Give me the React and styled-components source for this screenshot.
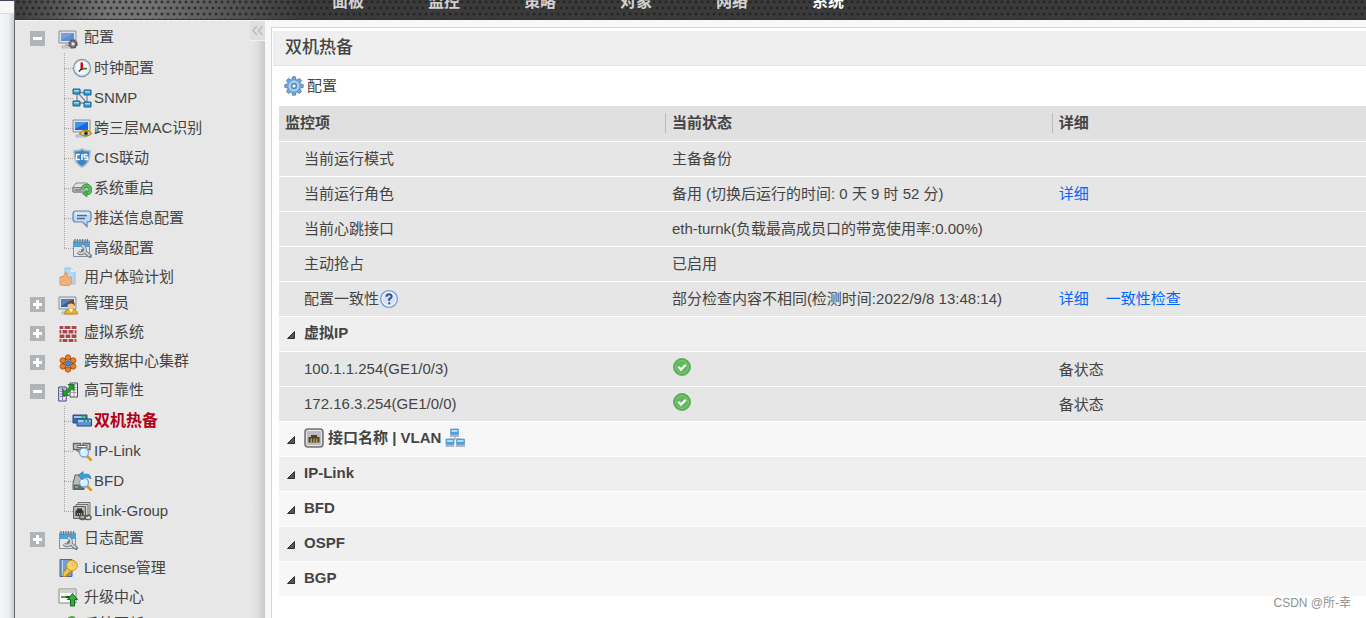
import React from "react";
import styled, { createGlobalStyle, css } from "styled-components";

const GlobalStyle = createGlobalStyle`
  *, *::before, *::after { box-sizing: border-box; }
  body {
    margin: 0;
    background: #fff;
    color: #444;
    font-family: "Liberation Sans", "Noto Sans CJK SC", sans-serif;
    font-size: 15px;
  }
  a { text-decoration: none; color: inherit; }
  button { font: inherit; color: inherit; background: none; border: 0; padding: 0; cursor: pointer; }
  ul { list-style: none; margin: 0; padding: 0; }
  svg { display: block; flex: none; }
`;

const Page = styled.div`
  display: flex;
  height: 100vh;
  overflow: hidden;
`;

const Edge = styled.div`
  flex: none;
  width: 15px;
  border-right: 1px solid #666;
  background: linear-gradient(to right, #f4f5f8, #eceef1 60%, #cdced1);
  &::before {
    content: "";
    display: block;
    height: 14px;
    background: #f6f5f7;
    border-top: 1px solid #45455c;
    border-bottom: 1px solid #dcdcde;
  }
`;

const Console = styled.div`
  flex: 1;
  min-width: 0;
  display: flex;
  flex-direction: column;
`;

const Header = styled.header`
  flex: none;
  height: 20px;
  overflow: hidden;
  border-bottom: 1px solid #4b2a30;
  background-color: #3a3a3b;
  background-image:
    radial-gradient(circle, rgba(30, 30, 31, 0.7) 1px, rgba(30, 30, 31, 0) 2px),
    radial-gradient(circle, rgba(30, 30, 31, 0.7) 1px, rgba(30, 30, 31, 0) 2px),
    linear-gradient(to right, #3e3e3f, #757576 90px, #757576 130px, #3b3b3c 290px);
  background-size: 6px 12px, 6px 12px, 100% 100%;
  background-position: 0 -4px, 3px 2px, 0 0;
`;

const Nav = styled.nav`
  display: flex;
  align-items: flex-end;
  height: 14px;
  padding-left: 302px;
`;

const NavLink = styled.a`
  flex: none;
  width: 96px;
  padding-left: 15px;
  font-size: 16px;
  line-height: 24px;
  font-weight: bold;
  color: ${(p) => (p.$active ? "#fff" : "#d2d2d2")};
`;

const Body = styled.div`
  flex: 1;
  min-height: 0;
  display: flex;
  border-top: 1px solid #f6f6f6;
`;

const Sidebar = styled.aside`
  flex: none;
  width: 250px;
  display: flex;
  background: linear-gradient(to right, #e7e7e7 236px, #e0e0e0 242px, #c9c9c9);
`;

const Tree = styled.ul`
  flex: 1;
  padding: 3px 0 0 15px;
`;

const CollapseButton = styled.button`
  flex: none;
  width: 15px;
  height: 20px;
  display: flex;
  align-items: center;
  justify-content: center;
  background: #dedede;
  border-bottom: 1px solid #f2f2f2;
`;

const TreeRow = styled.div`
  display: flex;
  align-items: center;
  height: ${(p) => (p.$compact ? "27px" : "29px")};
`;

const ToggleSlot = styled.div`
  width: 28px;
`;

const Toggle = styled.button`
  display: block;
`;

const TreeLink = styled.a`
  display: flex;
  align-items: center;
  gap: 6px;
  line-height: 20px;
  white-space: nowrap;
`;

const GroupText = styled.span`
  padding-bottom: ${(p) => (p.$raised ? "4px" : "0")};
`;

const Branch = styled.ul`
  margin-left: 34px;
`;

const Leaf = styled.li`
  display: flex;
  align-items: center;
  height: 30px;
  background-image:
    repeating-linear-gradient(to bottom, #a9a9a9 0 1px, transparent 1px 2px),
    repeating-linear-gradient(to right, #a9a9a9 0 1px, transparent 1px 2px);
  background-repeat: no-repeat;
  background-size: 1px 100%, 9px 1px;
  background-position: 0 0, 0 15px;
  padding-left: 8px;
  &:last-child { background-size: 1px 15px, 9px 1px; }
`;

const LeafLink = styled(TreeLink)`
  gap: 2px;
  ${(p) => p.$active && css`
    color: #b00018;
    font-size: 16px;
    font-weight: bold;
  `}
`;

const Main = styled.main`
  flex: 1;
  min-width: 0;
  display: flex;
  padding: 6px 0 0 6px;
  background: #f8f8f8;
`;

const Panel = styled.section`
  flex: 1;
  min-width: 0;
  padding: 3px 0 0 1px;
  background: #fff;
  border-top: 1px solid #d6d6d6;
  border-left: 1px solid #d6d6d6;
`;

const PanelTitle = styled.h1`
  margin: 0;
  height: 35px;
  padding-left: 12px;
  font-size: 17px;
  line-height: 34px;
  font-weight: 500;
  background: #efefef;
  border-bottom: 1px solid #e2e2e2;
`;

const Toolbar = styled.div`
  display: flex;
  align-items: center;
  height: 40px;
  padding-left: 11px;
`;

const ToolButton = styled.button`
  display: flex;
  align-items: center;
  gap: 3px;
  line-height: 20px;
`;

const StatusTable = styled.table`
  width: calc(100% - 6px);
  margin-left: 6px;
  table-layout: fixed;
  border-collapse: collapse;
`;

const HeadCell = styled.th`
  width: ${(p) => p.$width || "auto"};
  height: 35px;
  padding: 0;
  text-align: left;
  background: #e0e0e0;
`;

const HeadText = styled.div`
  padding-left: 6px;
  line-height: 20px;
  border-left: ${(p) => (p.$divided ? "1px solid #bbb" : "0")};
`;

const Row = styled.tr`
  height: 35px;
  background: ${(p) => p.$tone};
  border-top: 1px solid #fff;
`;

const Cell = styled.td`
  padding: 0 0 0 ${(p) => (p.$first ? "25px" : "7px")};
  white-space: nowrap;
`;

const CellLine = styled.div`
  display: flex;
  align-items: center;
  line-height: 20px;
`;

const StatusMark = styled.span`
  padding-bottom: 4px;
`;

const DetailLinks = styled(CellLine)`
  gap: 17px;
  color: #06f;
`;

const SectionCell = styled.th`
  padding: 0 0 2px 8px;
  text-align: left;
`;

const SectionButton = styled.button`
  display: flex;
  align-items: center;
  gap: 9px;
  font-weight: bold;
  line-height: 20px;
`;

const SectionLabel = styled.span`
  display: flex;
  align-items: center;
  gap: 4px;
`;

const Watermark = styled.div`
  position: absolute;
  right: 15px;
  bottom: 6px;
  font-size: 12px;
  line-height: 18px;
  color: #909090;
`;

const Svg = ({ size = 20, children }) => (
  <svg width={size} height={size} viewBox="0 0 20 20" aria-hidden="true">{children}</svg>
);

const Monitor = ({ screen = "#5f8fd2", light = "#86aee2" }) => (
  <>
    <path d="M1 2h17v12H1z" fill="#dfe2e5" stroke="#8b9096" />
    <path d="M3 4h13v8H3z" fill={screen} />
    <path d="M3 4h13L3 11z" fill={light} opacity=".6" />
    <path d="M7 14h5v3H7z" fill="#b4b8bc" />
    <path d="M4 17h11v2H4z" fill="#d3d6d9" stroke="#9a9ea3" strokeWidth=".6" />
  </>
);

const Magnifier = () => (
  <>
    <path d="M15 15l4 4" stroke="#e39b12" strokeWidth="3" strokeLinecap="round" />
    <circle cx="12" cy="11.500" r="4.500" fill="#d7efff" stroke="#7fa6c6" strokeWidth="1.300" />
    <path d="M9.500 11a3 3 0 0 1 2.500-2.500" fill="none" stroke="#fff" strokeWidth="1.500" />
  </>
);

const MonitorGear = () => (
  <Svg>
    <Monitor />
    <circle cx="15" cy="15" r="3.700" fill="#9a9a9a" stroke="#555" strokeWidth="2" strokeDasharray="2 .9" />
    <circle cx="15" cy="15" r="3.200" fill="#8b8b8b" stroke="#4d4d4d" strokeWidth=".8" />
    <circle cx="15" cy="15" r="1.400" fill="#eee" />
  </Svg>
);

const ClockIcon = () => (
  <Svg>
    <circle cx="10" cy="10" r="8.500" fill="#f4f8fc" stroke="#8295ab" strokeWidth="1.300" />
    <circle cx="10" cy="10" r="7" fill="none" stroke="#d3deeb" />
    <path d="M8.500 4.500h2.500V12H8.500z" fill="#c41212" />
    <path d="M11 9.800h4v1.700h-4z" fill="#1c8b1c" />
    <path d="M9.500 11l-2.700 2.500" stroke="#222" strokeWidth="1.200" />
  </Svg>
);

const SnmpIcon = () => (
  <Svg>
    <path d="M5 4v11M15 5v10M8 4l4 1M8 15l4 0M7 6l7 8" fill="none" stroke="#7d8a94" strokeWidth="1.300" />
    {[[1, 1], [12, 2], [1, 13], [12, 14]].map(([x, y]) => (
      <g key={`${x}-${y}`}>
        <path d={`M${x} ${y}h7v5h-7z`} fill="#2f9fd6" stroke="#1b6590" />
        <path d={`M${x + 1} ${y + 1}h5v1.500h-5z`} fill="#9adcf6" />
      </g>
    ))}
  </Svg>
);

const MonitorEye = () => (
  <Svg>
    <Monitor screen="#1767dc" light="#55b2ff" />
    <path d="M8 15.500q6-6.500 11.500 0-5.500 5-11.500 0z" fill="#fff1c9" stroke="#c88516" strokeWidth="1.500" />
    <circle cx="14" cy="15.300" r="2.400" fill="#417a76" />
    <circle cx="14" cy="15.300" r="1.100" fill="#111" />
  </Svg>
);

const ShieldIcon = () => (
  <Svg>
    <path d="M10 1c2 1.500 5 2 8 1.700 0 8-1.500 13-8 16.300C3.500 15.700 2 10.700 2 2.700 5 3 8 2.500 10 1z" fill="#3a85c7" stroke="#a9bac8" strokeWidth="1.600" />
    <path d="M7.800 6.500H4.500v5h3.300M10 6v6M15.500 6.500h-3.300V9h3.300v2.500h-3.300" fill="none" stroke="#fff" strokeWidth="1.500" />
  </Svg>
);

const RestartIcon = () => (
  <Svg>
    <path d="M4 5h11l4 4v5H1V9z" fill="#e0e3e1" stroke="#858b87" />
    <path d="M1 9.500h18V14H1z" fill="#b3b9b5" stroke="#7d837f" />
    <path d="M3 12h6" stroke="#6b716d" />
    <path d="M10.500 11.500a4 4 0 1 1 4.500 4" fill="none" stroke="#2f9134" strokeWidth="3.600" />
    <path d="M10.500 11.500a4 4 0 1 1 4.500 4" fill="none" stroke="#63c561" strokeWidth="2" />
    <path d="M15 12.500V19l-4.500-3.300z" fill="#4ab34a" stroke="#2f9134" strokeWidth=".7" />
  </Svg>
);

const MessageIcon = () => (
  <Svg>
    <path d="M4 3h12q3 0 3 3v5q0 3-3 3l-1 0v4.500L10.500 14H4q-3 0-3-3V6q0-3 3-3z" fill="#b9d9f7" stroke="#6486aa" strokeWidth="1.200" />
    <path d="M3 4.500h14v3H3z" fill="#e2f1ff" opacity=".8" />
    <path d="M5 7.500h10M5 10.500h8" stroke="#5a6b84" strokeWidth="1.400" />
  </Svg>
);

const WrenchCalendar = () => (
  <Svg>
    <path d="M1.500 3h16v15.500h-16z" fill="#e3e7ea" stroke="#81909c" />
    <path d="M2 4h15v5H2z" fill="#4aa3d9" />
    <path d="M3 1v4M5.500 1v4M8 1v4M10.500 1v4M13 1v4M15.500 1v4" stroke="#667786" strokeWidth="1.200" />
    <path d="M11 12.500l7 5.500" stroke="#757a7f" strokeWidth="4" strokeLinecap="round" />
    <path d="M10 7.500a4 4 0 1 1-4 6.500" fill="none" stroke="#757a7f" strokeWidth="3.600" />
    <path d="M10 7.500a4 4 0 1 1-4 6.500M12 13l6 5" fill="none" stroke="#cfd3d6" strokeWidth="1.900" />
  </Svg>
);

const ThumbPage = () => (
  <Svg>
    <path d="M7 1h6l4 4v12H7z" fill="#b4daf3" stroke="#8fbddd" />
    <path d="M13 1v4h4z" fill="#e9f6ff" />
    <path d="M2 10l4-1 1-3.500q2.500-.5 2.500 2L9 10h4q1.500 1 .5 2.500 1 1 0 2.200.4 1.200-.6 2-.3 1.600-2 1.800H6l-4-.6z" fill="#efb27c" stroke="#d4925c" strokeWidth=".8" />
  </Svg>
);

const AdminIcon = () => (
  <Svg>
    <Monitor screen="#2e5fa9" light="#6d98d4" />
    <path d="M6.500 19q.5-5 6.500-5.500 6 .5 6.500 5.500z" fill="#e9b526" stroke="#a97a10" strokeWidth=".8" />
    <path d="M11 14l2 3.500 2-3.500z" fill="#fff" />
    <circle cx="13" cy="10.500" r="3.500" fill="#f1c391" />
    <path d="M9.300 10.500Q9 5.500 13 5.700q4.300 0 3.800 5.500Q16 8.500 13 8.600q-3 0-3.700 1.900z" fill="#7d4513" />
  </Svg>
);

const FirewallIcon = () => (
  <Svg>
    <path d="M1 1.500h18v17H1z" fill="#f8f1f1" />
    <path d="M1.500 2h17v16h-17z" fill="#a8474b" />
    <path d="M1 5.500h18M1 10h18M1 14.500h18M6 2v3.500M13 2v3.500M4 5.500V10M10 5.500V10M16 5.500V10M7 10v4.500M13 10v4.500M4 14.500V18M10 14.500V18M16 14.500V18" stroke="#f6eded" strokeWidth="1.200" />
  </Svg>
);

const ClusterIcon = () => (
  <Svg>
    <circle cx="10" cy="10.500" r="5" fill="none" stroke="#7b4518" strokeWidth="3" />
    {[[10, 4.500], [15.300, 7.500], [15.300, 13.500], [10, 16.500], [4.700, 13.500], [4.700, 7.500]].map(([x, y]) => (
      <circle key={`${x}-${y}`} cx={x} cy={y} r="2.700" fill="#e87f24" stroke="#9c4c12" strokeWidth=".8" />
    ))}
    <circle cx="10" cy="10.500" r="2.600" fill="#3f8bdd" stroke="#2a5590" strokeWidth=".8" />
  </Svg>
);

const ReliabilityIcon = () => (
  <Svg>
    <path d="M.700 5h7.500v14H.700z" fill="#e9e8f6" stroke="#46407c" />
    <path d="M2 7h5M2 9.500h5M2 12h5M2 14.500h5M4.500 6v12" stroke="#77719f" strokeWidth=".9" />
    <path d="M12 1h7.500v14H12z" fill="#f4f4f4" stroke="#4b4b4b" />
    <path d="M13 3h5.500M13 5.500h5.500M13 8h5.500M13 10.500h5.500M16 2v12" stroke="#9a9a9a" strokeWidth=".9" />
    <path d="M16 2.500v6l-2-1.800-4.800 5L11 13.500H5v-6l1.900 1.900 5-5L10 2.500z" fill="#20a024" stroke="#0c5c12" strokeWidth=".7" />
  </Svg>
);

const HotStandbyIcon = () => (
  <Svg>
    <path d="M1 4h14v8H1z" fill="#3b6fbd" stroke="#23477f" />
    <path d="M2 5h12v2H2z" fill="#9bc3f0" />
    <path d="M5 8h14.500v7H5z" fill="#5b92da" stroke="#23477f" />
    <path d="M6 9h12.500v2H6z" fill="#a9cff6" />
    <path d="M9.500 5.500h2M12.500 5.500h1.500M11.500 10h2M15 10h2" stroke="#1fa52b" strokeWidth="2" />
  </Svg>
);

const IpLinkIcon = () => (
  <Svg>
    <path d="M1.500 2.500h7v6h-7zM11 2.500h7v6h-7z" fill="#c5c5c5" stroke="#686868" strokeWidth="1.400" />
    <path d="M5 4.500h10v2H5z" fill="#f1f1f1" stroke="#5e5e5e" strokeWidth=".9" />
    <path d="M4 9q3 1 4 3" stroke="#777" strokeWidth="1.500" fill="none" />
    <Magnifier />
  </Svg>
);

const BfdIcon = () => (
  <Svg>
    <path d="M3 4h7l2 10v4.500H1V13z" fill="#b9bcbd" stroke="#5d6162" />
    <path d="M1.500 13.500h11v4.500h-11z" fill="#646869" />
    <path d="M3 16h3" stroke="#56d756" strokeWidth="1.600" />
    <Magnifier />
    <path d="M6 4.500L11 .5v2.700h5q2.500.5 3 4.500-2-1.900-8-1.700v3z" fill="#3d9edc" stroke="#1b6ca8" strokeWidth=".6" />
  </Svg>
);

const LinkGroupIcon = () => (
  <Svg>
    <path d="M6 1.500h12v12H6z" fill="#d6d6d6" stroke="#707070" />
    <path d="M4 3.500h12v12H4z" fill="#d6d6d6" stroke="#707070" />
    <path d="M1.500 5.500h12v12h-12z" fill="#b7b7b7" stroke="#626262" />
    <path d="M3.500 15V9.500H5v-2h5v2h1.500V15z" fill="#3b3527" />
    <path d="M5 12h1v2H5zM7 12h1v2H7zM9 12h1v2H9z" fill="#d0a52d" />
    <rect x="7.500" y="14.500" width="6" height="4" rx="2" fill="none" stroke="#606060" strokeWidth="1.500" />
    <rect x="13" y="14.500" width="6" height="4" rx="2" fill="none" stroke="#606060" strokeWidth="1.500" />
  </Svg>
);

const LicenseIcon = () => (
  <Svg>
    <path d="M2 1.500h12v17H2z" fill="#6f9ed0" stroke="#3f6b9d" />
    <path d="M4.500 2v16" stroke="#bdd7f0" />
    <path d="M10 9l-5 6v3.500h3.500v-2h2v-2h2l2-3z" fill="#f4c23d" stroke="#bf851a" />
    <circle cx="14" cy="7.500" r="5.300" fill="#f9d463" stroke="#c58f22" />
    <circle cx="15.500" cy="5.800" r="1.400" fill="#fff" stroke="#bd8720" strokeWidth=".7" />
  </Svg>
);

const UpgradeIcon = () => (
  <Svg>
    <path d="M1 2h17v14H1z" fill="#fafafa" stroke="#858585" />
    <path d="M1.500 2.500h16V6h-16z" fill="#cfcfcf" />
    <path d="M3 10h8" stroke="#43b02a" strokeWidth="2" />
    <path d="M8 10h4" stroke="#1c4f1c" strokeWidth="2" />
    <path d="M14.500 6.500l5 6h-3v6.500h-4v-6.500h-3z" fill="#38ab41" stroke="#146a1d" />
  </Svg>
);

const UpdateIcon = () => (
  <Svg>
    <path d="M2 7h12v11H2z" fill="#ddd" stroke="#777" />
    <path d="M10 2q2-1.500 4-1.500t3.500 1.500l2 5h-3v7h-4V7H9z" fill="#55b83f" stroke="#2c7d1e" strokeWidth=".7" />
  </Svg>
);

const GearIcon = () => (
  <Svg>
    {[0, 45, 90, 135, 180, 225, 270, 315].map((angle) => (
      <path key={angle} d="M7.700 4.500L8.700.8h2.600L12.300 4.500z" fill="#76a8d8" stroke="#4e7fb2" strokeWidth=".9" transform={`rotate(${angle} 10 10)`} />
    ))}
    <circle cx="10" cy="10" r="6.300" fill="#8dbbe6" stroke="#5686b7" strokeWidth=".5" />
    <circle cx="10" cy="10" r="4.400" fill="none" stroke="#b5d6f3" strokeWidth="1.300" />
    <circle cx="10" cy="10" r="2.300" fill="#f5f9fd" stroke="#4f7fb1" strokeWidth="1.200" />
  </Svg>
);

const HelpIcon = () => (
  <Svg>
    <circle cx="10" cy="10" r="8.300" fill="#d9e1ec" stroke="#7da0da" strokeWidth="1.600" />
    <circle cx="10" cy="10" r="6.900" fill="none" stroke="#f5f9ff" strokeWidth="1.200" />
    <path d="M7.500 7.800Q7.500 5.300 10 5.300t2.600 2.200Q12.600 9 10.200 10v2" fill="none" stroke="#2c599b" strokeWidth="2" />
    <path d="M9.200 13.300h2v2h-2z" fill="#2c599b" />
  </Svg>
);

const CheckIcon = () => (
  <Svg>
    <circle cx="10" cy="10" r="8.500" fill="#4fae4e" stroke="#6aae65" />
    <circle cx="10" cy="10" r="6.400" fill="#62b85d" stroke="#93d28c" strokeWidth=".8" />
    <path d="M6.300 9.800l2.700 2.800 4.800-4.800" fill="none" stroke="#fff" strokeWidth="2.300" />
  </Svg>
);

const PortIcon = () => (
  <Svg>
    <rect x="1" y="1" width="18" height="18" rx="3" fill="#bdbdbd" stroke="#777" strokeWidth="1.600" />
    <rect x="2.500" y="2.500" width="15" height="15" rx="2" fill="none" stroke="#e5e5e5" />
    <path d="M4.500 14.500V9h2.500V7h6v2h2.500v5.500z" fill="#494337" />
    <path d="M6.500 10.500h1.500v4H6.500zM9.300 10.500h1.500v4H9.300zM12 10.500h1.500v4H12z" fill="#c59a36" />
  </Svg>
);

const VlanIcon = () => (
  <Svg>
    <path d="M10 8v3M4.500 13v-2h11v2" fill="none" stroke="#8fa4b3" />
    {[[5.500, 1], [1, 11], [11.500, 11]].map(([x, y]) => (
      <g key={x}>
        <path d={`M${x} ${y}h8v5.500h-8z`} fill="#3fa5ea" stroke="#6e9cc0" strokeWidth=".8" />
        <path d={`M${x + 1} ${y + 1}h6v2h-6z`} fill="#a5e1ff" />
        <path d={`M${x - 0.500} ${y + 7}h9`} stroke="#a6a6b4" strokeWidth="1.600" />
      </g>
    ))}
  </Svg>
);

const ToggleMark = ({ open }) => (
  <svg width="15" height="15" viewBox="0 0 15 15" aria-hidden="true">
    <path d="M0 0h15v15H0z" fill="#b0b4b6" />
    <path d={open ? "M3 6h9v3H3z" : "M3 6h3V3h3v3h3v3H9v3H6V9H3z"} fill="#fff" />
  </svg>
);

const ExpandedMark = () => (
  <svg width="8" height="12" viewBox="0 0 8 12" aria-hidden="true">
    <path d="M7.500 4.500v7H.500z" fill="#555" stroke="#2f2f2f" />
  </svg>
);

const DoubleChevron = () => (
  <svg width="13" height="11" viewBox="0 0 13 11" aria-hidden="true">
    <path d="M6 1L2 5.500 6 10M11.500 1l-4 4.500 4 4.500" fill="none" stroke="#bdbdbd" strokeWidth="1.500" />
  </svg>
);

const navItems = ["面板", "监控", "策略", "对象", "网络", "系统"];

const tree = [
  {
    label: "配置", icon: MonitorGear, open: true,
    children: [
      ["时钟配置", ClockIcon], ["SNMP", SnmpIcon], ["跨三层MAC识别", MonitorEye], ["CIS联动", ShieldIcon],
      ["系统重启", RestartIcon], ["推送信息配置", MessageIcon], ["高级配置", WrenchCalendar],
    ],
  },
  { label: "用户体验计划", icon: ThumbPage, compact: true },
  { label: "管理员", icon: AdminIcon, open: false },
  { label: "虚拟系统", icon: FirewallIcon, open: false },
  { label: "跨数据中心集群", icon: ClusterIcon, open: false },
  {
    label: "高可靠性", icon: ReliabilityIcon, open: true,
    children: [["双机热备", HotStandbyIcon], ["IP-Link", IpLinkIcon], ["BFD", BfdIcon], ["Link-Group", LinkGroupIcon]],
  },
  { label: "日志配置", icon: WrenchCalendar, open: false, compact: true },
  { label: "License管理", icon: LicenseIcon },
  { label: "升级中心", icon: UpgradeIcon },
  { label: "系统更新", icon: UpdateIcon, raised: true },
];

const activePage = "双机热备";

function TreeGroup({ item }) {
  const Icon = item.icon;
  const expandable = item.open !== undefined;
  return (
    <li>
      <TreeRow $compact={item.compact}>
        <ToggleSlot>
          {expandable && (
            <Toggle type="button" aria-label={item.label} aria-expanded={item.open}>
              <ToggleMark open={item.open} />
            </Toggle>
          )}
        </ToggleSlot>
        <TreeLink href="#">
          <Icon />
          <GroupText $raised={expandable || item.raised}>{item.label}</GroupText>
        </TreeLink>
      </TreeRow>
      {item.children && (
        <Branch>
          {item.children.map(([label, LeafIcon]) => (
            <Leaf key={label}>
              <LeafLink href="#" $active={label === activePage}>
                <LeafIcon />
                <span>{label}</span>
              </LeafLink>
            </Leaf>
          ))}
        </Branch>
      )}
    </li>
  );
}

function DataRow({ name, status, detail }) {
  return (
    <Row $tone="#e6e6e6">
      <Cell $first><CellLine>{name}</CellLine></Cell>
      <Cell><CellLine>{status}</CellLine></Cell>
      <Cell>{detail}</Cell>
    </Row>
  );
}

function SectionRow({ tone, children }) {
  return (
    <Row $tone={tone}>
      <SectionCell colSpan={3}>
        <SectionButton type="button" aria-expanded="true">
          <ExpandedMark />
          <SectionLabel>{children}</SectionLabel>
        </SectionButton>
      </SectionCell>
    </Row>
  );
}

export default function App() {
  return (
    <>
      <GlobalStyle />
      <Page>
        <Edge />
        <Console>
          <Header>
            <Nav>
              {navItems.map((item) => (
                <NavLink key={item} href="#" $active={item === "系统"}>{item}</NavLink>
              ))}
            </Nav>
          </Header>
          <Body>
            <Sidebar>
              <Tree>
                {tree.map((item) => <TreeGroup key={item.label} item={item} />)}
              </Tree>
              <CollapseButton type="button" aria-label="收起"><DoubleChevron /></CollapseButton>
            </Sidebar>
            <Main>
              <Panel>
                <PanelTitle>双机热备</PanelTitle>
                <Toolbar>
                  <ToolButton type="button"><GearIcon />配置</ToolButton>
                </Toolbar>
                <StatusTable>
                  <thead>
                    <tr>
                      <HeadCell $width="35.5%"><HeadText>监控项</HeadText></HeadCell>
                      <HeadCell $width="35.6%"><HeadText $divided>当前状态</HeadText></HeadCell>
                      <HeadCell><HeadText $divided>详细</HeadText></HeadCell>
                    </tr>
                  </thead>
                  <tbody>
                    <DataRow name="当前运行模式" status="主备备份" />
                    <DataRow
                      name="当前运行角色"
                      status="备用 (切换后运行的时间: 0 天 9 时 52 分)"
                      detail={<DetailLinks><a href="#">详细</a></DetailLinks>}
                    />
                    <DataRow name="当前心跳接口" status="eth-turnk(负载最高成员口的带宽使用率:0.00%)" />
                    <DataRow name="主动抢占" status="已启用" />
                    <DataRow
                      name={<>配置一致性<HelpIcon /></>}
                      status="部分检查内容不相同(检测时间:2022/9/8 13:48:14)"
                      detail={<DetailLinks><a href="#">详细</a><a href="#">一致性检查</a></DetailLinks>}
                    />
                    <SectionRow tone="#efefef">虚拟IP</SectionRow>
                    <DataRow name="100.1.1.254(GE1/0/3)" status={<StatusMark><CheckIcon /></StatusMark>} detail="备状态" />
                    <DataRow name="172.16.3.254(GE1/0/0)" status={<StatusMark><CheckIcon /></StatusMark>} detail="备状态" />
                    <SectionRow tone="#f7f7f7">
                      <PortIcon /><span>接口名称 | VLAN</span><VlanIcon />
                    </SectionRow>
                    <SectionRow tone="#efefef">IP-Link</SectionRow>
                    <SectionRow tone="#f7f7f7">BFD</SectionRow>
                    <SectionRow tone="#efefef">OSPF</SectionRow>
                    <SectionRow tone="#f7f7f7">BGP</SectionRow>
                  </tbody>
                </StatusTable>
              </Panel>
            </Main>
          </Body>
        </Console>
        <Watermark>CSDN @所-幸</Watermark>
      </Page>
    </>
  );
}
